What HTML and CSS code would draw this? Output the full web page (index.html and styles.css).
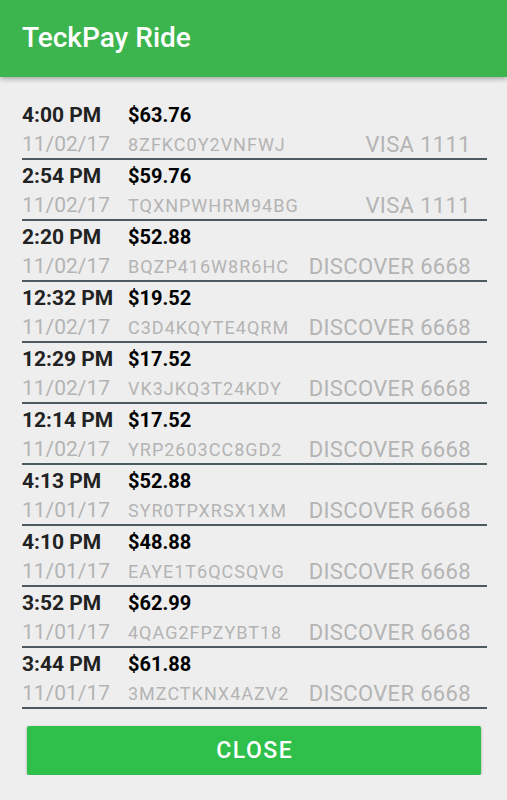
FILE: index.html
```html
<!DOCTYPE html>
<html>
<head>
<meta charset="utf-8">
<link rel="stylesheet" href="styles.css">
</head>
<body>
<header class="appbar"><h1 class="title">TeckPay Ride</h1></header>
<main class="content">
  <ul class="rides">
    <li class="ride"><div class="top"><span class="time">4:00 PM</span><span class="amount">$63.76</span></div><div class="bottom"><span class="date">11/02/17</span><span class="code">8ZFKC0Y2VNFWJ</span><span class="card">VISA 1111</span></div></li>
    <li class="ride"><div class="top"><span class="time">2:54 PM</span><span class="amount">$59.76</span></div><div class="bottom"><span class="date">11/02/17</span><span class="code">TQXNPWHRM94BG</span><span class="card">VISA 1111</span></div></li>
    <li class="ride"><div class="top"><span class="time">2:20 PM</span><span class="amount">$52.88</span></div><div class="bottom"><span class="date">11/02/17</span><span class="code">BQZP416W8R6HC</span><span class="card">DISCOVER 6668</span></div></li>
    <li class="ride"><div class="top"><span class="time">12:32 PM</span><span class="amount">$19.52</span></div><div class="bottom"><span class="date">11/02/17</span><span class="code">C3D4KQYTE4QRM</span><span class="card">DISCOVER 6668</span></div></li>
    <li class="ride"><div class="top"><span class="time">12:29 PM</span><span class="amount">$17.52</span></div><div class="bottom"><span class="date">11/02/17</span><span class="code">VK3JKQ3T24KDY</span><span class="card">DISCOVER 6668</span></div></li>
    <li class="ride"><div class="top"><span class="time">12:14 PM</span><span class="amount">$17.52</span></div><div class="bottom"><span class="date">11/02/17</span><span class="code">YRP2603CC8GD2</span><span class="card">DISCOVER 6668</span></div></li>
    <li class="ride"><div class="top"><span class="time">4:13 PM</span><span class="amount">$52.88</span></div><div class="bottom"><span class="date">11/01/17</span><span class="code">SYR0TPXRSX1XM</span><span class="card">DISCOVER 6668</span></div></li>
    <li class="ride"><div class="top"><span class="time">4:10 PM</span><span class="amount">$48.88</span></div><div class="bottom"><span class="date">11/01/17</span><span class="code">EAYE1T6QCSQVG</span><span class="card">DISCOVER 6668</span></div></li>
    <li class="ride"><div class="top"><span class="time">3:52 PM</span><span class="amount">$62.99</span></div><div class="bottom"><span class="date">11/01/17</span><span class="code">4QAG2FPZYBT18</span><span class="card">DISCOVER 6668</span></div></li>
    <li class="ride"><div class="top"><span class="time">3:44 PM</span><span class="amount">$61.88</span></div><div class="bottom"><span class="date">11/01/17</span><span class="code">3MZCTKNX4AZV2</span><span class="card">DISCOVER 6668</span></div></li>
  </ul>
  <button class="close">CLOSE</button>
</main>
</body>
</html>
```

FILE: styles.css
```css
html, body {
  margin: 0;
  padding: 0;
  background: #eeeeee;
  font-family: Roboto, "Liberation Sans", sans-serif;
}
.appbar {
  height: 77px;
  background: #3db54e;
  box-shadow: 0 2px 5px rgba(0,0,0,0.3);
  display: flex;
  align-items: center;
  padding-left: 22px;
  position: relative;
}
.title {
  margin: 0;
  color: #ffffff;
  font-size: 28px;
  font-weight: 500;
  padding-bottom: 2px;
}
.content {
  padding: 22px 20px 0 22px;
}
.rides {
  list-style: none;
  margin: 0;
  padding: 0;
}
.ride {
  height: 61px;
  box-sizing: border-box;
  padding-top: 1px;
  border-bottom: 2px solid #4d5b61;
}
.top {
  display: flex;
  height: 30px;
  align-items: center;
  font-size: 21px;
  font-weight: 700;
}
.time {
  width: 106px;
  color: #222222;
}
.amount {
  font-size: 20px;
  color: #000000;
}
.bottom {
  display: flex;
  height: 28px;
  align-items: center;
  color: #b4b4b4;
}
.date {
  width: 106px;
  font-size: 21px;
}
.code {
  font-size: 18px;
  letter-spacing: 1px;
  flex: 1;
}
.card {
  font-size: 22px;
  letter-spacing: 0.35px;
  padding-right: 16px;
}
.close {
  display: block;
  margin: 17px 0 0 5px;
  width: 454px;
  height: 49px;
  border: none;
  border-radius: 2px;
  background: #2ec04a;
  color: #ffffff;
  font-family: Roboto, "Liberation Sans", sans-serif;
  font-size: 23px;
  font-weight: 500;
  letter-spacing: 1.5px;
  padding: 0 0 0 1.5px;
  box-shadow: 0 1px 3px rgba(0,0,0,0.3);
}
```
